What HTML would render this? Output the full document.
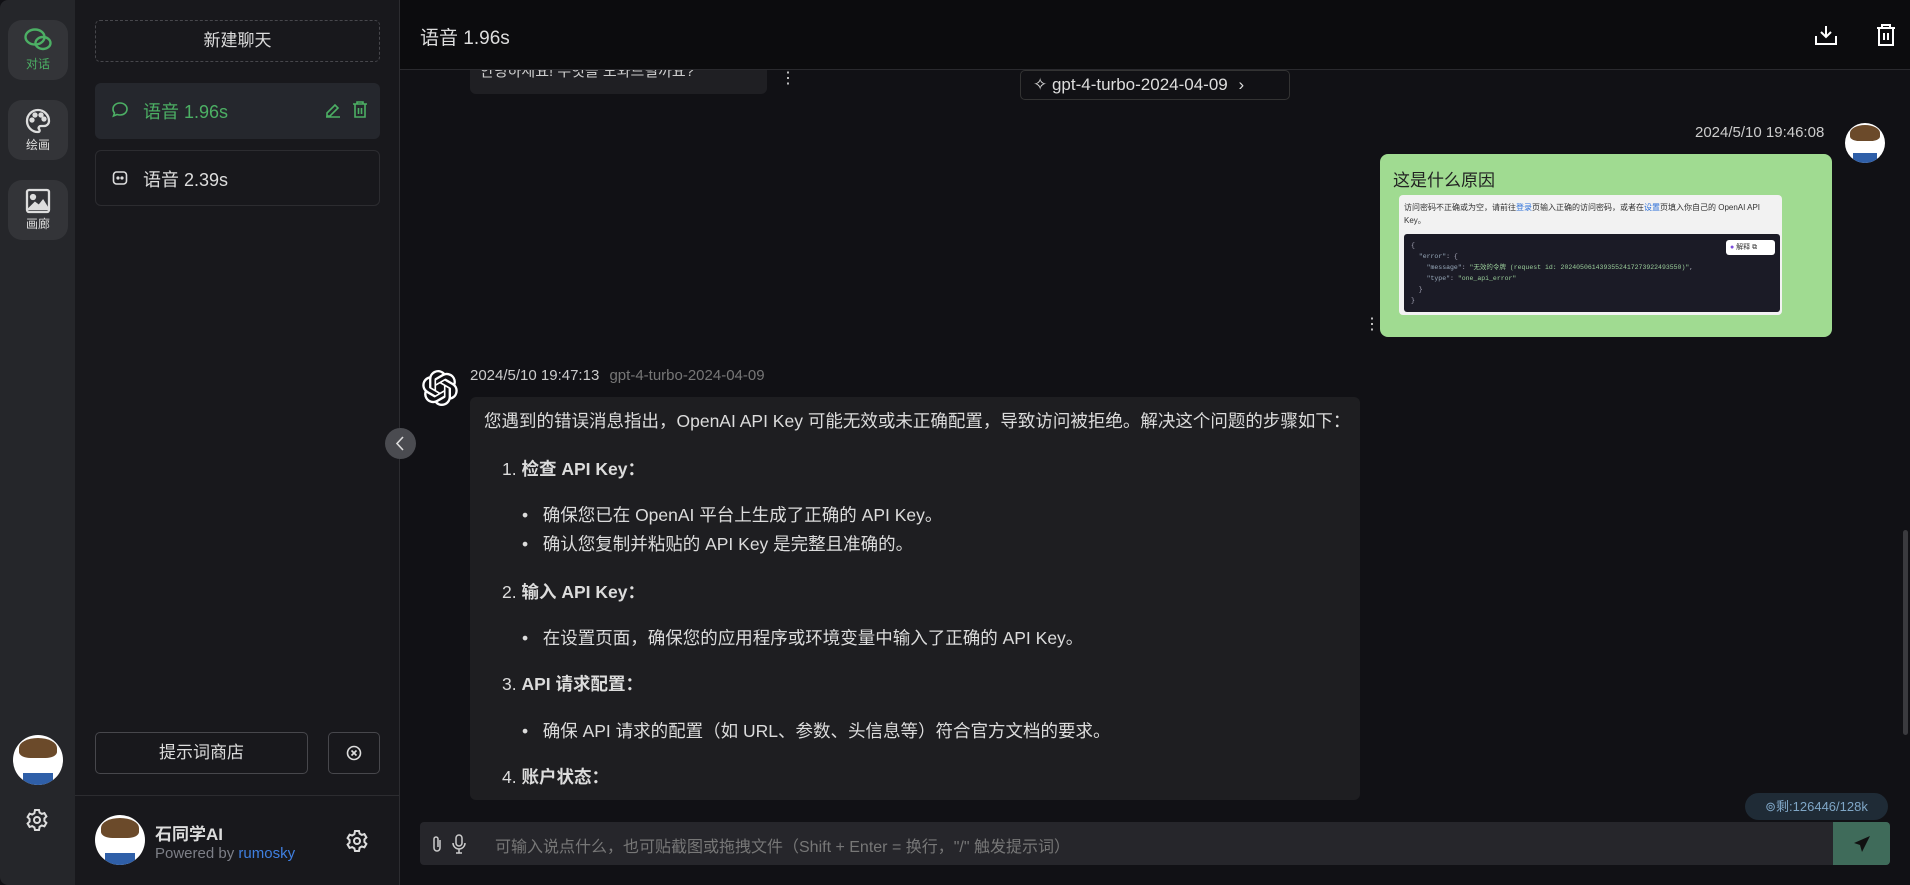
<!DOCTYPE html>
<html><head><meta charset="utf-8"><style>
*{box-sizing:border-box;margin:0;padding:0}
body{width:1910px;height:885px;overflow:hidden;background:#111115;font-family:"Liberation Sans","Noto Sans CJK SC",sans-serif;color:#d8d8d8;position:relative}
.a{position:absolute}
.rail{left:0;top:0;width:75px;height:885px;background:#25262a;border-radius:8px 0 0 8px}
.rb{left:8px;width:60px;height:60px;border-radius:14px;background:#333438;text-align:center;font-size:12px;color:#ddd}
.side{left:75px;top:0;width:325px;height:885px;background:#18181c;border-right:1px solid #2c2c30}
.btn{border:1px solid #47474c;border-radius:5px;text-align:center;color:#ddd;font-size:17px}
.main{left:400px;top:0;width:1510px;height:885px;background:#111115;overflow:hidden}
.hdr{left:0;top:0;width:1510px;height:70px;background:#0c0c0e;border-bottom:1px solid #2a2a2e;z-index:2}
.txt{font-size:17.5px;color:#dcdcdc;white-space:nowrap}
.av{border-radius:50%;overflow:hidden}
</style></head><body>
<div class="a rail">
 <div class="a rb" style="top:20px;color:#4caf64"><svg width="30" height="28" viewBox="0 0 30 28" style="margin-top:6px" fill="none" stroke="#4caf64" stroke-width="2.4"><ellipse cx="12" cy="11" rx="9.5" ry="7.5"/><ellipse cx="20" cy="17" rx="7.5" ry="6"/></svg><div style="margin-top:-2px">对话</div></div>
 <div class="a rb" style="top:100px"><svg width="28" height="28" viewBox="0 0 28 28" style="margin-top:7px" fill="none" stroke="#ddd" stroke-width="2.3"><path d="M14 3a11 11 0 1 0 0 22c2 0 2-2 1-3s0-3 2-3h3a5 5 0 0 0 5-5C25 8 20 3 14 3z"/><circle cx="8" cy="13" r="1.5" fill="#ddd"/><circle cx="11" cy="8" r="1.5" fill="#ddd"/><circle cx="17" cy="8" r="1.5" fill="#ddd"/><circle cx="20" cy="12" r="1.5" fill="#ddd"/></svg><div style="margin-top:-2px">绘画</div></div>
 <div class="a rb" style="top:180px"><svg width="26" height="26" viewBox="0 0 26 26" style="margin-top:8px" fill="none" stroke="#ddd" stroke-width="2.3"><rect x="2" y="2" width="22" height="22" rx="2"/><circle cx="8" cy="9" r="2" fill="#ddd"/><path d="M4 21l6-6 4 3 4-5 5 8z" fill="#ddd"/></svg><div style="margin-top:-2px">画廊</div></div>
 <div class="a av" style="left:13px;top:735px;width:50px;height:50px;background:#fff"><div style="position:absolute;left:6px;top:3px;width:38px;height:20px;background:#6b4a2a;border-radius:50% 50% 30% 30%"></div><div style="position:absolute;left:10px;top:38px;width:30px;height:12px;background:#2f5fa8"></div></div>
 <svg class="a" style="left:25px;top:808px" width="24" height="24" viewBox="0 0 24 24" fill="none" stroke="#ddd" stroke-width="2"><path d="M10 2h4l.6 2.6 2.2 1.3 2.6-.8 2 3.4-2 1.9v2.6l2 1.9-2 3.4-2.6-.8-2.2 1.3L14 22h-4l-.6-2.6-2.2-1.3-2.6.8-2-3.4 2-1.9V11l-2-1.9 2-3.4 2.6.8 2.2-1.3z"/><circle cx="12" cy="12" r="3"/></svg>
</div>
<div class="a side">
 <div class="a btn" style="left:20px;top:20px;width:285px;height:42px;line-height:40px;border-style:dashed">新建聊天</div>
 <div class="a" style="left:20px;top:83px;width:285px;height:56px;background:#25272d;border-radius:6px;color:#4caf64;font-size:18px">
  <svg class="a" style="left:16px;top:18px" width="18" height="18" viewBox="0 0 18 18" fill="none" stroke="#4caf64" stroke-width="1.6"><path d="M9 2c4 0 7 2.6 7 6s-3 6-7 6c-1 0-2-.2-3-.5L2.5 15l1-3C2.5 11 2 9.6 2 8c0-3.4 3-6 7-6z"/></svg>
  <span class="a" style="left:48px;top:15px">语音 1.96s</span>
  <svg class="a" style="left:230px;top:19px" width="16" height="16" viewBox="0 0 16 16" fill="none" stroke="#4caf64" stroke-width="1.6"><path d="M2 11l8-8 3 3-8 8H2zM1 15h14"/></svg>
  <svg class="a" style="left:257px;top:18px" width="16" height="17" viewBox="0 0 16 17" fill="none" stroke="#4caf64" stroke-width="1.6"><path d="M1 3h14M5 3V1h6v2M3 3v13h10V3M6.5 7v6M9.5 7v6"/></svg>
 </div>
 <div class="a" style="left:20px;top:150px;width:285px;height:56px;border:1px solid #2c2c30;border-radius:6px;font-size:18px;color:#ddd">
  <svg class="a" style="left:16px;top:19px" width="16" height="16" viewBox="0 0 16 16" fill="none" stroke="#ddd" stroke-width="1.6"><rect x="1.5" y="2" width="13" height="12" rx="3"/><circle cx="6" cy="8" r=".8" fill="#ddd"/><circle cx="10" cy="8" r=".8" fill="#ddd"/></svg>
  <span class="a" style="left:47px;top:15px">语音 2.39s</span>
 </div>
 <div class="a btn" style="left:20px;top:732px;width:213px;height:42px;line-height:40px">提示词商店</div>
 <div class="a btn" style="left:253px;top:732px;width:52px;height:42px"><svg style="margin-top:12px" width="16" height="16" viewBox="0 0 16 16" fill="none" stroke="#ddd" stroke-width="1.6"><circle cx="8" cy="8" r="6.5"/><path d="M5.5 5.5l5 5M10.5 5.5l-5 5"/></svg></div>
 <div class="a" style="left:0;top:795px;width:325px;height:1px;background:#2c2c30"></div>
 <div class="a av" style="left:20px;top:815px;width:50px;height:50px;background:#fff"><div style="position:absolute;left:6px;top:3px;width:38px;height:20px;background:#6b4a2a;border-radius:50% 50% 30% 30%"></div><div style="position:absolute;left:10px;top:38px;width:30px;height:12px;background:#2f5fa8"></div></div>
 <div class="a" style="left:80px;top:820px;font-size:17px;font-weight:bold;color:#ddd">石同学AI</div>
 <div class="a" style="left:80px;top:845px;font-size:15px;color:#7d7f87">Powered by <span style="color:#3f7fe0">rumosky</span></div>
 <svg class="a" style="left:270px;top:829px" width="24" height="24" viewBox="0 0 24 24" fill="none" stroke="#ddd" stroke-width="2"><path d="M10 2h4l.6 2.6 2.2 1.3 2.6-.8 2 3.4-2 1.9v2.6l2 1.9-2 3.4-2.6-.8-2.2 1.3L14 22h-4l-.6-2.6-2.2-1.3-2.6.8-2-3.4 2-1.9V11l-2-1.9 2-3.4 2.6.8 2.2-1.3z"/><circle cx="12" cy="12" r="3"/></svg>
</div>
<div class="a" style="left:385px;top:428px;width:31px;height:31px;border-radius:50%;background:#4a4b50;z-index:3"><svg style="margin:8px 0 0 10px" width="10" height="15" viewBox="0 0 10 15" fill="none" stroke="#ddd" stroke-width="1.6"><path d="M8 1L2 7.5 8 14"/></svg></div>
<div class="a main">
 <div class="a hdr"><span class="a" style="left:20px;top:23px;font-size:19px;color:#ddd">语音 1.96s</span>
  <svg class="a" style="left:1415px;top:25px" width="22" height="20" viewBox="0 0 22 20" fill="none" stroke="#fff" stroke-width="2"><path d="M11 1v11M6 7l5 5 5-5M1 11v8h20v-8"/></svg>
  <svg class="a" style="left:1476px;top:23px" width="20" height="23" viewBox="0 0 20 23" fill="none" stroke="#fff" stroke-width="2"><path d="M1 5h18M6 5V2h8v3M3 5v17h14V5M8 10v7M12 10v7"/></svg>
 </div>
 <div class="a" style="left:70px;top:50px;width:297px;height:44px;background:#1f1f23;border-radius:6px"><span class="a" style="left:10px;top:10px;font-size:15px;color:#ccc;font-family:'Liberation Sans','Noto Sans CJK KR',sans-serif">안녕하세요! 무엇을 도와드릴까요?</span></div>
 <div class="a" style="left:380px;top:76px;font-size:16px;color:#ddd;line-height:6px">⋮</div>
 <div class="a" style="left:620px;top:70px;width:270px;height:30px;border:1px solid #333;border-radius:5px;font-size:17px;color:#ddd;line-height:28px;padding-left:12px">✧ gpt-4-turbo-2024-04-09 <span style="margin-left:6px">›</span></div>
 <div class="a" style="left:1295px;top:124px;font-size:15px;color:#ccc">2024/5/10 19:46:08</div>
 <div class="a av" style="left:1445px;top:123px;width:40px;height:40px;background:#fff"><div style="position:absolute;left:5px;top:2px;width:30px;height:16px;background:#6b4a2a;border-radius:50% 50% 30% 30%"></div><div style="position:absolute;left:8px;top:30px;width:24px;height:10px;background:#2f5fa8"></div></div>
 <div class="a" style="left:980px;top:154px;width:452px;height:183px;background:#a0db91;border-radius:8px">
  <div class="a" style="left:13px;top:12px;font-size:17px;color:#222">这是什么原因</div>
  <div class="a" style="left:19px;top:41px;width:383px;height:120px;background:#f2f2f2;border-radius:4px">
   <div class="a" style="left:5px;top:6px;font-size:8px;color:#333;width:370px;line-height:13px">访问密码不正确或为空，请前往<span style="color:#2a6ed8">登录</span>页输入正确的访问密码，或者在<span style="color:#2a6ed8">设置</span>页填入你自己的 OpenAI API Key。</div>
   <div class="a" style="left:5px;top:39px;width:376px;height:78px;background:#1b1b26;border-radius:3px;font-family:'Liberation Mono',monospace;font-size:6.5px;color:#aab;line-height:11px;padding:6px 7px;white-space:pre">{
  <span style="color:#9ab">"error"</span>: {
    <span style="color:#9ab">"message"</span>: <span style="color:#9c9">"无效的令牌 (request id: 2024050614393552417273922493550)"</span>,
    <span style="color:#9ab">"type"</span>: <span style="color:#9c9">"one_api_error"</span>
  }
}</div>
   <div class="a" style="left:327px;top:45px;width:49px;height:15px;background:#fff;border-radius:3px;font-size:7px;color:#333;line-height:15px;padding-left:4px"><span style="color:#7c4ddd">●</span> 解释 ⧉</div>
  </div>
 </div>
 <div class="a" style="left:964px;top:322px;font-size:16px;color:#ddd;line-height:6px">⋮</div>
 <svg class="a" style="left:22px;top:370px" width="36" height="36" viewBox="0 0 24 24" fill="#fff"><path d="M22.28 9.82a5.98 5.98 0 0 0-.52-4.91 6.05 6.05 0 0 0-6.51-2.9A6.07 6.07 0 0 0 4.980 4.18a5.98 5.98 0 0 0-4 2.9 6.05 6.05 0 0 0 .74 7.1 5.98 5.98 0 0 0 .51 4.91 6.05 6.05 0 0 0 6.52 2.9A5.98 5.98 0 0 0 13.26 24a6.06 6.06 0 0 0 5.77-4.21 5.99 5.99 0 0 0 4-2.9 6.06 6.06 0 0 0-.75-7.07zm-9.02 12.61a4.48 4.48 0 0 1-2.88-1.04l.14-.08 4.78-2.76a.8.8 0 0 0 .39-.68v-6.74l2.02 1.17a.07.07 0 0 1 .04.05v5.58a4.5 4.5 0 0 1-4.49 4.5zm-9.66-4.130a4.47 4.47 0 0 1-.53-3.01l.14.09 4.78 2.76a.77.77 0 0 0 .78 0l5.84-3.37v2.33a.08.08 0 0 1-.03.06l-4.83 2.79a4.5 4.5 0 0 1-6.15-1.65zM2.34 7.9a4.49 4.49 0 0 1 2.37-1.97V11.6a.77.77 0 0 0 .39.68l5.81 3.35-2.02 1.17a.08.08 0 0 1-.07 0l-4.83-2.79A4.5 4.5 0 0 1 2.34 7.87zm16.6 3.86L13.1 8.36l2.02-1.16a.08.08 0 0 1 .07 0l4.83 2.79a4.49 4.49 0 0 1-.68 8.1v-5.68a.79.79 0 0 0-.41-.67zm2.01-3.02l-.14-.09-4.77-2.78a.78.78 0 0 0-.79 0L9.41 9.23V6.9a.07.07 0 0 1 .03-.06l4.83-2.79a4.5 4.5 0 0 1 6.68 4.66zM8.31 12.86l-2.02-1.16a.08.08 0 0 1-.04-.06V6.07a4.5 4.5 0 0 1 7.38-3.45l-.14.08-4.78 2.76a.8.8 0 0 0-.39.68zm1.1-2.37l2.6-1.5 2.6 1.5v3l-2.6 1.5-2.6-1.5z"/></svg>
 <div class="a" style="left:70px;top:367px;font-size:15px;color:#ccc">2024/5/10 19:47:13 <span style="color:#777;margin-left:6px">gpt-4-turbo-2024-04-09</span></div>
 <div class="a" style="left:70px;top:397px;width:890px;height:403px;background:#1e1e21;border-radius:6px" >
  <div class="a txt" style="left:14px;top:11px">您遇到的错误消息指出，OpenAI API Key 可能无效或未正确配置，导致访问被拒绝。解决这个问题的步骤如下：</div>
  <div class="a txt" style="left:32px;top:59px">1. <b>检查 API Key：</b></div>
  <div class="a txt" style="left:52px;top:105px">•&nbsp;&nbsp; 确保您已在 OpenAI 平台上生成了正确的 API Key。</div>
  <div class="a txt" style="left:52px;top:134px">•&nbsp;&nbsp; 确认您复制并粘贴的 API Key 是完整且准确的。</div>
  <div class="a txt" style="left:32px;top:182px">2. <b>输入 API Key：</b></div>
  <div class="a txt" style="left:52px;top:228px">•&nbsp;&nbsp; 在设置页面，确保您的应用程序或环境变量中输入了正确的 API Key。</div>
  <div class="a txt" style="left:32px;top:274px">3. <b>API 请求配置：</b></div>
  <div class="a txt" style="left:52px;top:321px">•&nbsp;&nbsp; 确保 API 请求的配置（如 URL、参数、头信息等）符合官方文档的要求。</div>
  <div class="a txt" style="left:32px;top:367px">4. <b>账户状态：</b></div>
 </div>
 <div class="a" style="left:1503px;top:530px;width:5px;height:205px;background:#3a3a3e;border-radius:3px"></div>
 <div class="a" style="left:1345px;top:793px;width:143px;height:27px;background:#1f2b36;border-radius:14px;font-size:13px;color:#7fa6c6;line-height:27px;text-align:center">⊚剩:126446/128k</div>
 <div class="a" style="left:20px;top:822px;width:1470px;height:43px;background:#26262b;border-radius:4px">
  <svg class="a" style="left:10px;top:13px" width="14" height="18" viewBox="0 0 14 18" fill="none" stroke="#ccc" stroke-width="1.5"><path d="M10 5v8a3 3 0 0 1-6 0V4a2 2 0 0 1 4 0v8"/></svg>
  <svg class="a" style="left:32px;top:12px" width="14" height="20" viewBox="0 0 14 20" fill="none" stroke="#ccc" stroke-width="1.5"><rect x="4" y="1" width="6" height="11" rx="3"/><path d="M1 9a6 6 0 0 0 12 0M7 15v4M4 19h6"/></svg>
  <div class="a" style="left:75px;top:11px;font-size:16px;color:#777">可输入说点什么，也可贴截图或拖拽文件（Shift + Enter = 换行，"/" 触发提示词）</div>
  <div class="a" style="left:1413px;top:0;width:57px;height:43px;background:#3f6b5a;border-radius:0 4px 4px 0"><svg style="margin:13px 0 0 20px" width="18" height="18" viewBox="0 0 18 18" fill="#111"><path d="M17 1L1 8l6 2 2 7z"/></svg></div>
 </div>
</div>
</body></html>
